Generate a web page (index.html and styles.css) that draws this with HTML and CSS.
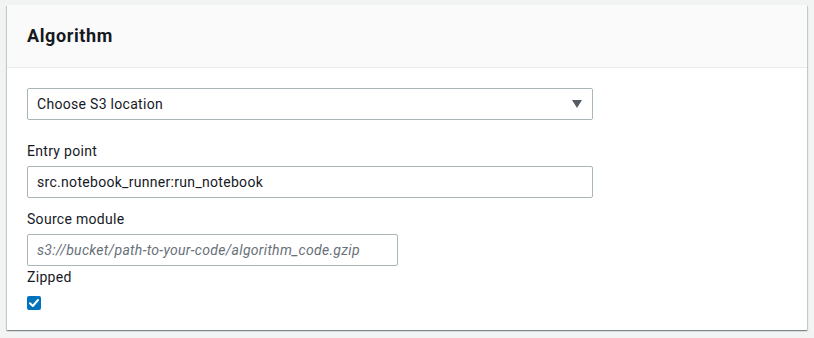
FILE: index.html
```html
<!DOCTYPE html>
<html lang="en">
<head>
    <meta charset="UTF-8">
    <meta name="viewport" content="width=device-width, initial-scale=1.0">
    <title>Algorithm</title>
    <link rel="stylesheet" href="styles.css">
</head>
<body>
    <div class="container">
        <div class="header">
            <h2>Algorithm</h2>
        </div>
        <div class="content">
            <div class="select">
                <span>Choose S3 location</span>
                <span class="caret"></span>
            </div>
            <label class="label first">Entry point</label>
            <input type="text" class="input" value="src.notebook_runner:run_notebook">
            <label class="label">Source module</label>
            <input type="text" class="input short" placeholder="s3://bucket/path-to-your-code/algorithm_code.gzip">
            <label class="label tight">Zipped</label>
            <div class="checkbox">
                <svg width="14" height="14" viewBox="0 0 14 14">
                    <polyline points="3,7.2 5.8,10 11,4" fill="none" stroke="#fff" stroke-width="2" stroke-linecap="round" stroke-linejoin="round"/>
                </svg>
            </div>
        </div>
    </div>
</body>
</html>
```
FILE: styles.css
```css
body {
    margin: 0;
    padding: 5px 7px;
    background: #f2f3f3;
    font-family: 'Roboto', 'Liberation Sans', sans-serif;
    font-size: 14px;
    line-height: 22px;
    letter-spacing: 0.3px;
    color: #16191f;
}
.container {
    width: 800px;
    background: #fff;
    box-shadow: 0 1px 1px 0 rgba(0, 28, 36, 0.3), 1px 1px 1px 0 rgba(0, 28, 36, 0.15), -1px 1px 1px 0 rgba(0, 28, 36, 0.15);
}
.header {
    background: #fafafa;
    padding: 20px;
    border-bottom: 1px solid #eaeded;
}
h2 {
    margin: 0;
    font-size: 18px;
    line-height: 22px;
    font-weight: 700;
    letter-spacing: 0.6px;
}
.content {
    padding: 20px;
    display: flex;
    flex-direction: column;
    align-items: flex-start;
}
.select, .input {
    box-sizing: border-box;
    width: 566px;
    height: 32px;
    border: 1px solid #aab7b8;
    border-radius: 2px;
    padding: 0 9px;
    font-family: inherit;
    font-size: 14px;
    letter-spacing: 0.3px;
    color: #16191f;
    background: #fff;
    outline: none;
}
.select {
    display: flex;
    align-items: center;
    justify-content: space-between;
}
.caret {
    width: 0;
    height: 0;
    margin-right: 1px;
    border-left: 5px solid transparent;
    border-right: 5px solid transparent;
    border-top: 8px solid #545b64;
}
.input.short {
    width: 371px;
}
.input::placeholder {
    color: #687078;
    font-style: italic;
}
.label {
    display: block;
    margin: 10px 0 4px;
}
.label.first {
    margin-top: 20px;
}
.label.tight {
    margin: 0 0 8px;
}
.checkbox {
    width: 14px;
    height: 14px;
    border-radius: 2px;
    background: #0073bb;
    display: flex;
}
```
